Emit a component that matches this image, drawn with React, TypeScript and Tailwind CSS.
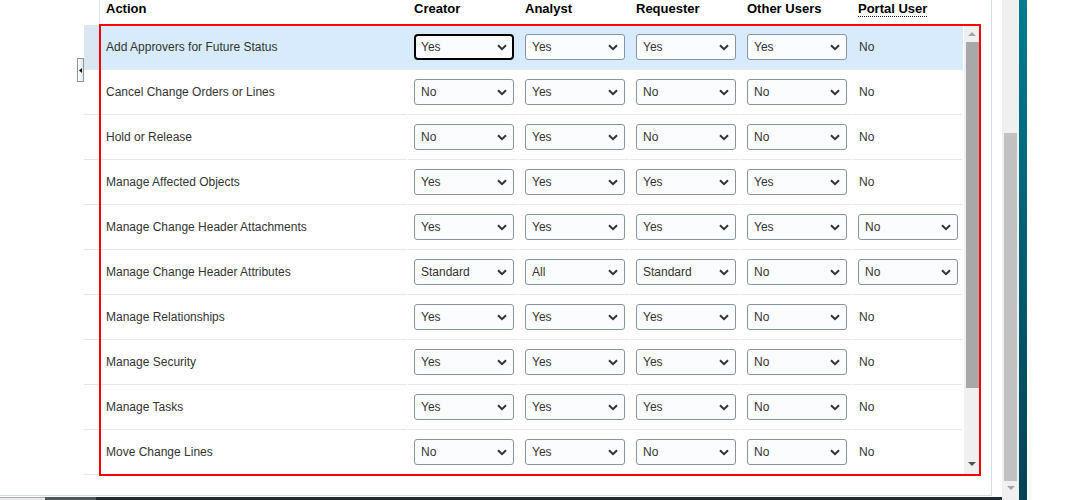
import React from "react";

const rows: { action: string; vals: string[]; portal: string; portalSel?: boolean }[] = [
  { action: "Add Approvers for Future Status", vals: ["Yes", "Yes", "Yes", "Yes"], portal: "No" },
  { action: "Cancel Change Orders or Lines", vals: ["No", "Yes", "No", "No"], portal: "No" },
  { action: "Hold or Release", vals: ["No", "Yes", "No", "No"], portal: "No" },
  { action: "Manage Affected Objects", vals: ["Yes", "Yes", "Yes", "Yes"], portal: "No" },
  { action: "Manage Change Header Attachments", vals: ["Yes", "Yes", "Yes", "Yes"], portal: "No", portalSel: true },
  { action: "Manage Change Header Attributes", vals: ["Standard", "All", "Standard", "No"], portal: "No", portalSel: true },
  { action: "Manage Relationships", vals: ["Yes", "Yes", "Yes", "No"], portal: "No" },
  { action: "Manage Security", vals: ["Yes", "Yes", "Yes", "No"], portal: "No" },
  { action: "Manage Tasks", vals: ["Yes", "Yes", "Yes", "No"], portal: "No" },
  { action: "Move Change Lines", vals: ["No", "Yes", "No", "No"], portal: "No" },
];

function Chevron() {
  return (
    <svg width="10" height="7" viewBox="0 0 10 7" className="shrink-0">
      <path d="M1 1.2 L5 5.2 L9 1.2" fill="none" stroke="#333" strokeWidth="2" />
    </svg>
  );
}

function Select({ value, focused }: { value: string; focused?: boolean }) {
  return (
    <div
      className={
        focused
          ? "w-[100px] h-[26px] flex items-center justify-between pl-[5px] pr-[5px] bg-[#fbfcfe] border-2 border-black rounded-[4px]"
          : "w-[100px] h-[26px] flex items-center justify-between pl-[6px] pr-[6px] bg-[#fbfcfe] border border-[#8596a0] rounded-[3px]"
      }
    >
      <span className="text-[12px] leading-[14px] text-[#333]">{value}</span>
      <Chevron />
    </div>
  );
}

export default function App() {
  return (
    <div className="w-[1081px] h-[500px] overflow-hidden bg-white flex font-['Liberation_Sans',Arial,sans-serif]">
      <div className="w-[1002px] h-[500px] flex flex-col">
        <div className="h-[496px] flex">
          <div className="relative w-[992px] h-[496px] border-r border-b border-[#d5dde3] flex">
            <div className="w-[84px] shrink-0" />
            <div className="flex flex-col">
              <div className="h-[25px] flex items-start">
                <div className="w-[15px] h-[24px]" />
                <div className="w-px h-[24px] bg-[#e3e6e8]" />
                <div className="w-[307px] mr-px pl-[6px] pt-[1px] text-[13px] leading-[15px] font-bold text-black">Action</div>
                {["Creator", "Analyst", "Requester", "Other Users"].map((h) => (
                  <div key={h} className="w-[110px] mr-px pl-[6px] pt-[1px] text-[13px] leading-[15px] font-bold text-black">
                    {h}
                  </div>
                ))}
                <div className="w-[110px] mr-px pl-[6px] pt-[1px] flex items-start">
                  <span className="block text-[13px] leading-[15px] font-bold text-black border-b border-dotted border-[#222]">
                    Portal User
                  </span>
                </div>
              </div>
              <div className="flex h-[450px]">
                <div className="w-[880px] flex flex-col">
                  {rows.map((r, i) => (
                    <div key={r.action} className="flex h-[45px]">
                      <div className={(i === 0 ? "bg-[#dae6f2] " : "") + "w-[15px] mr-px border-b border-[#e4e8eb]"} />
                      <div className={(i === 0 ? "bg-[#d7ebfc] " : "") + "flex"}>
                        <div className="w-[307px] mr-px border-b border-[#e6e8ea] pl-[6px] flex items-center text-[12px] text-[#333]">
                          {r.action}
                        </div>
                        {r.vals.map((v, j) => (
                          <div key={j} className="w-[110px] mr-px border-b border-[#e6e8ea] pl-[6px] flex items-center">
                            <Select value={v} focused={i === 0 && j === 0} />
                          </div>
                        ))}
                        <div className="w-[110px] mr-px border-b border-[#e6e8ea] pl-[6px] flex items-center">
                          {r.portalSel ? (
                            <Select value={r.portal} />
                          ) : (
                            <span className="text-[12px] pl-px text-[#333]">{r.portal}</span>
                          )}
                        </div>
                      </div>
                    </div>
                  ))}
                </div>
                <div className="w-[15px] h-[450px] bg-[#f0f0f0] flex flex-col items-end">
                  <div className="w-[15px] h-[17px] flex items-end justify-center pb-[6px]">
                    <svg width="8" height="4" viewBox="0 0 8 4"><path d="M0 4 L4 0 L8 4 Z" fill="#a3a3a3" /></svg>
                  </div>
                  <div className="w-[13px] h-[346px] bg-[#a8a8a8]" />
                  <div className="flex-1" />
                  <div className="w-[15px] h-[16px] flex items-start justify-center pt-[3px]">
                    <svg width="8" height="4" viewBox="0 0 8 4"><path d="M0 0 L8 0 L4 4 Z" fill="#505050" /></svg>
                  </div>
                </div>
              </div>
            </div>
            <div className="absolute left-[77px] top-[58px] w-[7px] h-[24px] border border-[#8a9aa5] bg-gradient-to-r from-white to-[#e4e6e8] flex items-center justify-center">
              <svg width="3" height="5" viewBox="0 0 3 5"><path d="M3 0 L0 2.5 L3 5 Z" fill="#111" /></svg>
            </div>
            <div className="absolute left-[99px] top-[24px] w-[882px] h-[452px] border-2 border-[#ff0000] pointer-events-none" />
          </div>
          <div className="w-[10px]" />
        </div>
        <div className="h-px bg-white" />
        <div className="h-[3px] flex">
          <div className="w-[45px] bg-[#e9ebec] border-t border-[#a7adb0]" />
          <div className="w-[51px] bg-[#4f575b]" />
          <div className="flex-1 bg-[#1f2b31]" />
        </div>
      </div>
      <div className="w-[17px] h-[500px] bg-[#f0f0f0] flex flex-col items-center">
        <div className="h-[133px]" />
        <div className="w-[13px] h-[348px] bg-[#c1c1c1]" />
        <div className="h-[5px]" />
        <svg width="8" height="4" viewBox="0 0 8 4"><path d="M0 0 L8 0 L4 4 Z" fill="#a3a3a3" /></svg>
      </div>
      <div className="w-[8px] h-[500px] bg-gradient-to-b from-[#007d8f] via-[#005f72] to-[#004353]" />
      <div className="flex-1" />
    </div>
  );
}
